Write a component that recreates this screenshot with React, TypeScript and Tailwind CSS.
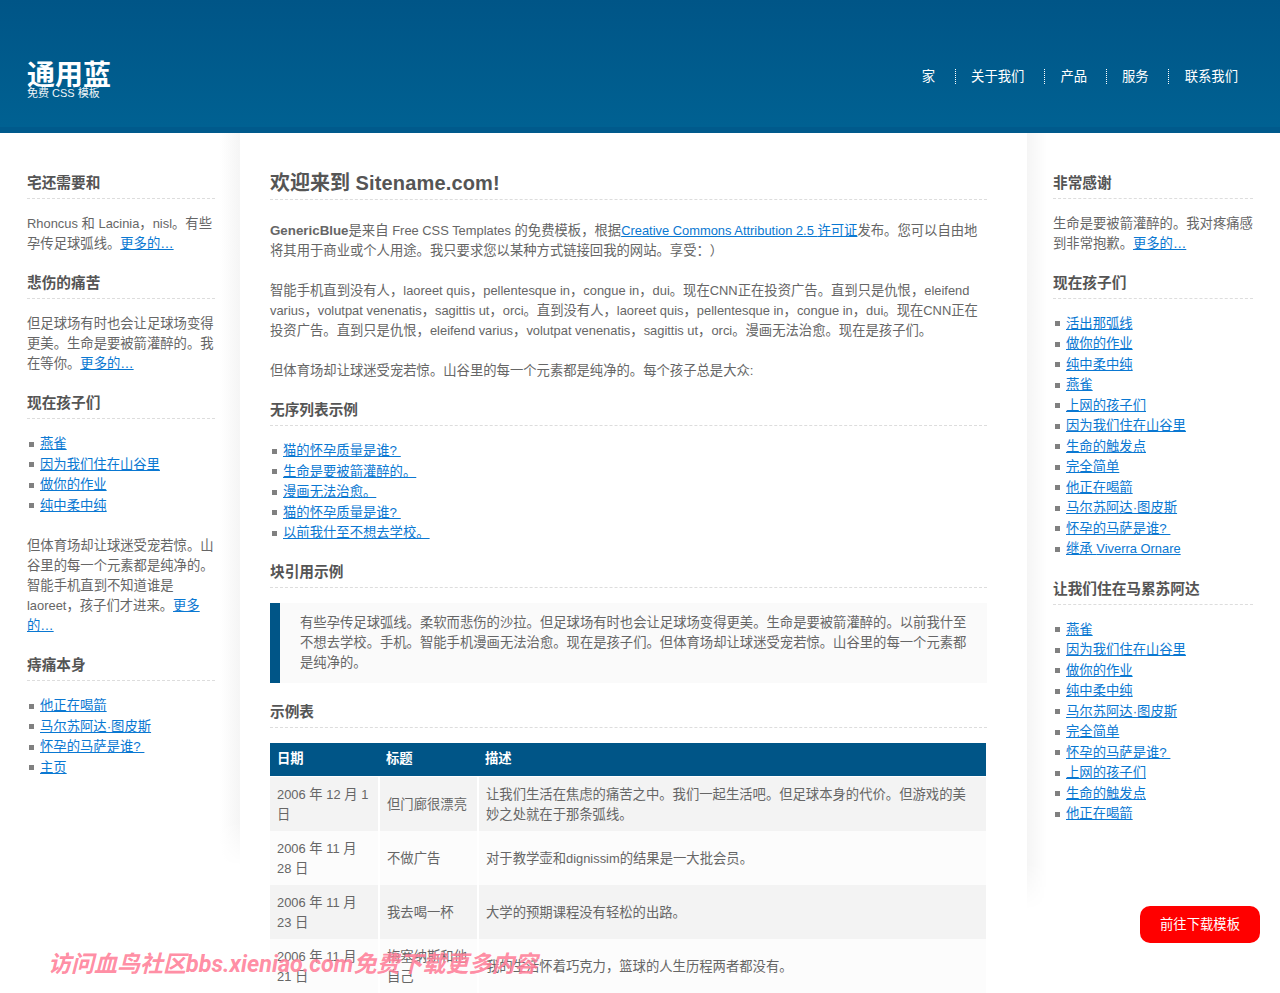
const font = '[font-family:"Liberation_Sans","Noto_Sans_CJK_SC",sans-serif] [text-spacing-trim:space-all]';

// latin runs sit a little smaller than the cjk around them
const mix = (text: string) =>
  text.split(/([A-Za-z0-9][A-Za-z0-9 .]*)/).map((part, i) =>
    i % 2 ? (
      <span key={i} className="text-[12.9px]">
        {part}
      </span>
    ) : (
      part
    ),
  );

const SideHeading = ({ children }: { children: React.ReactNode }) => (
  <h2 className="mt-[19px] mb-[15px] border-b border-dashed border-[#dddddd] pb-[5px] text-[14.67px] leading-5 font-bold text-[#555555]">
    {children}
  </h2>
);

const BulletList = ({ items, className = "" }: { items: string[]; className?: string }) => (
  <ul className={className}>
    {items.map((item, i) => (
      <li key={i} className="flex h-[20.5px] items-center leading-5">
        <span className="mr-1.5 ml-0.5 h-[5px] w-[5px] shrink-0 bg-[#808080]" />
        <a href="#" className="whitespace-pre text-[#0a78d2] underline">
          {mix(item)}
        </a>
      </li>
    ))}
  </ul>
);

const More = ({ children = "更多的…" }: { children?: React.ReactNode }) => (
  <a href="#" className="text-[#0a78d2] underline">
    {children}
  </a>
);

const MainHeading = ({ children }: { children: React.ReactNode }) => (
  <h3 className="mt-[19px] mb-[15px] border-b border-dashed border-[#dddddd] pb-[5px] text-[14.67px] leading-5 font-bold text-[#555555]">
    {children}
  </h3>
);

const rows = [
  ["2006 年 12 月 1 日", "但门廊很漂亮", "让我们生活在焦虑的痛苦之中。我们一起生活吧。但足球本身的代价。但游戏的美妙之处就在于那条弧线。"],
  ["2006 年 11 月 28 日", "不做广告", "对于教学壶和dignissim的结果是一大批会员。"],
  ["2006 年 11 月 23 日", "我去喝一杯", "大学的预期课程没有轻松的出路。"],
  ["2006 年 11 月 21 日", "梅塞纳斯和他自己", "我的生活怀着巧克力，篮球的人生历程两者都没有。"],
];

export default function App() {
  return (
    <div className={`relative h-[993px] overflow-hidden bg-white text-[13.33px] leading-5 text-[#666666] ${font}`}>
      <header className="flex h-[133px] items-start justify-between border-b-[6px] border-[#005a8c] bg-gradient-to-b from-[#005587] to-[#006192] pt-[62px] pr-[42px] pl-[27px]">
        <div className="text-white">
          <h1 className="text-[28px] leading-[28px] font-bold">通用蓝</h1>
          <p className="-mt-[3px] text-[11px] leading-3 text-[#f0f5f8]">免费 CSS 模板</p>
        </div>
        <nav className="mt-[7px] flex items-center text-white">
          <a href="#" className="border-r border-dotted border-white pr-5 leading-[15px]">家</a>
          <a href="#" className="border-r border-dotted border-white pr-5 pl-[15px] leading-[15px]">关于我们</a>
          <a href="#" className="border-r border-dotted border-white pr-[19px] pl-[15px] leading-[15px]">产品</a>
          <a href="#" className="border-r border-dotted border-white pr-[19px] pl-[15px] leading-[15px]">服务</a>
          <a href="#" className="pl-4 leading-[15px]">联系我们</a>
        </nav>
      </header>

      <div className="flex items-start">
        <aside className="w-[220px] shrink-0 pt-[21px] pr-[5px] pl-[27px]">
          <SideHeading>宅还需要和</SideHeading>
          <p>{mix("Rhoncus 和 Lacinia，nisl。有些孕传足球弧线。")}<More /></p>
          <SideHeading>悲伤的痛苦</SideHeading>
          <p>但足球场有时也会让足球场变得更美。生命是要被箭灌醉的。我在等你。<More /></p>
          <SideHeading>现在孩子们</SideHeading>
          <BulletList items={["燕雀", "因为我们住在山谷里", "做你的作业", "纯中柔中纯"]} />
          <p className="mt-5">
            {mix("但体育场却让球迷受宠若惊。山谷里的每一个元素都是纯净的。智能手机直到不知道谁是 laoreet，孩子们才进来。")}<More>更多的…</More>
          </p>
          <SideHeading>痔痛本身</SideHeading>
          <BulletList items={["他正在喝箭", "马尔苏阿达·图皮斯", "怀孕的马萨是谁? ", "主页"]} />
        </aside>

        <div className="h-[733px] w-5 shrink-0 bg-gradient-to-r from-white to-[#f5f5f5] [mask-image:linear-gradient(to_bottom,black_94%,transparent)]" />

        <main className="w-[787px] shrink-0 pt-[37px] pr-[40px] pl-[30px]">
          <h2 className="mb-[21px] border-b border-dashed border-[#dddddd] pb-[3px] text-[20px] leading-[26px] font-bold text-[#555555]">
            欢迎来到 <span className="tracking-[0.15px]">Sitename.com!</span>
          </h2>
          <p>
            <strong className="font-bold">GenericBlue</strong>{mix("是来自 Free CSS Templates 的免费模板，根据")}<a href="#" className="text-[#0a78d2] underline">{mix("Creative Commons Attribution 2.5 许可证")}</a>发布。您可以自由地将其用于商业或个人用途。我只要求您以某种方式链接回我的网站。享受：）
          </p>
          <p className="mt-5">
            {mix("智能手机直到没有人，laoreet quis，pellentesque in，congue in，dui。现在CNN正在投资广告。直到只是仇恨，eleifend varius，volutpat venenatis，sagittis ut，orci。直到没有人，laoreet quis，pellentesque in，congue in，dui。现在CNN正在投资广告。直到只是仇恨，eleifend varius，volutpat venenatis，sagittis ut，orci。漫画无法治愈。现在是孩子们。")}
          </p>
          <p className="mt-5">但体育场却让球迷受宠若惊。山谷里的每一个元素都是纯净的。每个孩子总是大众:</p>

          <MainHeading>无序列表示例</MainHeading>
          <BulletList className="-mb-px" items={["猫的怀孕质量是谁? ", "生命是要被箭灌醉的。", "漫画无法治愈。", "猫的怀孕质量是谁? ", "以前我什至不想去学校。"]} />

          <MainHeading>块引用示例</MainHeading>
          <blockquote className="mb-px border-l-[10px] border-[#005587] bg-[#fafafa] py-2.5 pr-5 pl-5">
            有些孕传足球弧线。柔软而悲伤的沙拉。但足球场有时也会让足球场变得更美。生命是要被箭灌醉的。以前我什至不想去学校。手机。智能手机漫画无法治愈。现在是孩子们。但体育场却让球迷受宠若惊。山谷里的每一个元素都是纯净的。
          </blockquote>

          <MainHeading>示例表</MainHeading>
          <table className="w-[716px] table-fixed border-collapse">
            <colgroup>
              <col className="w-[109px]" />
              <col className="w-[99px]" />
              <col />
            </colgroup>
            <thead>
              <tr className="h-[34px] border-b border-white bg-[#005587] text-left font-bold text-white">
                <th className="px-[7px]">日期</th>
                <th className="px-[7px]">标题</th>
                <th className="px-[7px]">描述</th>
              </tr>
            </thead>
            <tbody>
              {rows.map((row, i) => (
                <tr key={i} className={i % 2 === 0 ? "bg-[#f3f3f3]" : "bg-[#fcfcfc]"}>
                  {row.map((cell, j) => (
                    <td key={j} className={`px-[7px] pt-2 pb-1.5 ${j > 0 ? "border-l-2 border-white" : ""}`}>
                      {mix(cell)}
                    </td>
                  ))}
                </tr>
              ))}
            </tbody>
          </table>
        </main>

        <div className="h-[777px] w-5 shrink-0 bg-gradient-to-l from-white to-[#f5f5f5] [mask-image:linear-gradient(to_bottom,black_94%,transparent)]" />

        <aside className="w-[233px] shrink-0 pt-[21px] pr-[27px] pl-[6px]">
          <SideHeading>非常感谢</SideHeading>
          <p>生命是要被箭灌醉的。我对疼痛感到非常抱歉。<More /></p>
          <SideHeading>现在孩子们</SideHeading>
          <BulletList className="-mt-[0.5px] mb-[0.5px]" items={["活出那弧线", "做你的作业", "纯中柔中纯", "燕雀", "上网的孩子们", "因为我们住在山谷里", "生命的触发点", "完全简单", "他正在喝箭", "马尔苏阿达·图皮斯", "怀孕的马萨是谁? ", "继承 Viverra Ornare"]} />
          <SideHeading>让我们住在马累苏阿达</SideHeading>
          <BulletList items={["燕雀", "因为我们住在山谷里", "做你的作业", "纯中柔中纯", "马尔苏阿达·图皮斯", "完全简单", "怀孕的马萨是谁? ", "上网的孩子们", "生命的触发点", "他正在喝箭"]} />
        </aside>
      </div>

      <p className="absolute top-[950px] left-[48px] text-[23px] leading-7 font-bold whitespace-nowrap text-[#ff7f99]/90 italic">
        访问血鸟社区<span className="[font-family:Roboto,sans-serif] text-[23.3px]">bbs.xieniao.com</span>免费下载更多内容
      </p>
      <a href="#" className="absolute top-[906px] left-[1140px] flex h-[37px] w-[120px] items-center justify-center rounded-[10px] bg-[#ff0000] text-[13.33px] text-white">
        前往下载模板
      </a>
    </div>
  );
}
